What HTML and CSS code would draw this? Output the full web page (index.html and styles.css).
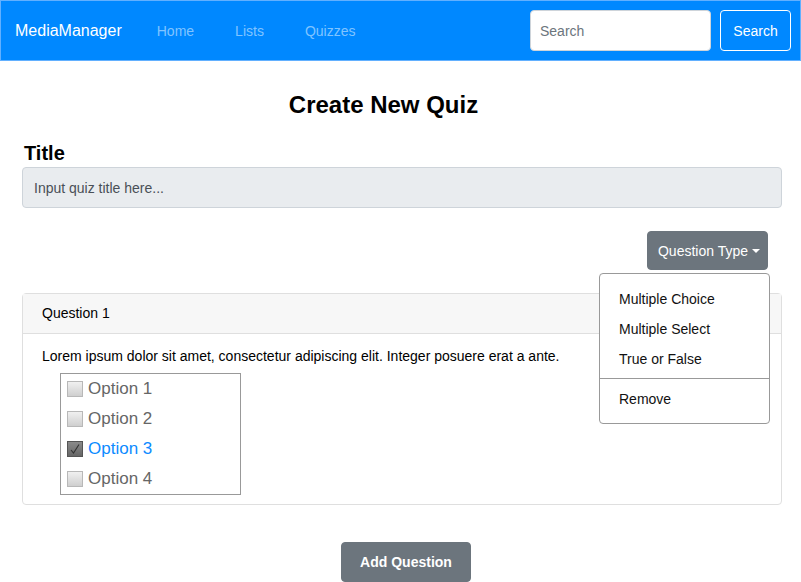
FILE: index.html
```html
<!DOCTYPE html>
<html>
<head>
<meta charset="utf-8">
<link rel="stylesheet" href="styles.css">
</head>
<body>
<nav class="navbar">
  <a class="brand">MediaManager</a>
  <ul class="nav-links">
    <li><a>Home</a></li>
    <li><a>Lists</a></li>
    <li><a>Quizzes</a></li>
  </ul>
  <form class="search">
    <input class="search-input" type="text" placeholder="Search">
    <button class="search-btn" type="button">Search</button>
  </form>
</nav>
<main class="container">
  <h1 class="page-title">Create New Quiz</h1>
  <label class="field-label">Title</label>
  <input class="title-input" type="text" placeholder="Input quiz title here...">
  <div class="toolbar">
    <div class="dropdown">
      <button class="btn-gray" type="button">Question Type<span class="caret"></span></button>
      <div class="menu">
        <a class="menu-item">Multiple Choice</a>
        <a class="menu-item">Multiple Select</a>
        <a class="menu-item">True or False</a>
        <div class="menu-divider"></div>
        <a class="menu-item">Remove</a>
      </div>
    </div>
  </div>
  <section class="card">
    <div class="card-header">Question 1</div>
    <div class="card-body">
      <p class="question-text">Lorem ipsum dolor sit amet, consectetur adipiscing elit. Integer posuere erat a ante.</p>
      <div class="options">
        <div class="option"><span class="box"></span><span>Option 1</span></div>
        <div class="option"><span class="box"></span><span>Option 2</span></div>
        <div class="option selected"><span class="box checked"><svg width="14" height="14" viewBox="0 0 14 14"><path d="M3 8 L5.5 11 L11 2.5" fill="none" stroke="#333" stroke-width="1.1"/></svg></span><span>Option 3</span></div>
        <div class="option"><span class="box"></span><span>Option 4</span></div>
      </div>
    </div>
  </section>
  <div class="actions">
    <button class="btn-gray btn-bold" type="button">Add Question</button>
  </div>
</main>
</body>
</html>
```

FILE: styles.css
```css
* { box-sizing: border-box; }
html, body { margin: 0; padding: 0; }
body {
  font-family: "Liberation Sans", Arial, sans-serif;
  font-size: 14px;
  color: #000;
  background: #fff;
  overflow: hidden;
}
.navbar {
  display: flex;
  align-items: center;
  height: 61px;
  padding: 0 9px 0 14px;
  background: #0088ff;
  border: 1px solid #62b0ff;
}
.brand {
  font-size: 16px;
  color: #fff;
  margin-right: 14.5px;
}
.nav-links {
  display: flex;
  list-style: none;
  margin: 0;
  padding: 0;
  flex: 1;
}
.nav-links a {
  display: block;
  padding: 0 20.5px;
  font-size: 14px;
  color: #80c4ff;
}
.search { display: flex; gap: 9px; }
.search-input {
  width: 181px;
  height: 41px;
  padding: 0 9px;
  border: 1px solid #ced4da;
  border-radius: 4px;
  font: 14px "Liberation Sans", Arial, sans-serif;
  color: #495057;
}
.search-input::placeholder { color: #6c757d; }
.search-btn {
  width: 71px;
  height: 41px;
  background: transparent;
  border: 1px solid #fff;
  border-radius: 4px;
  color: #fff;
  font: 14px "Liberation Sans", Arial, sans-serif;
  padding: 0;
}
.container {
  width: 760px;
  margin-left: 22px;
}
.page-title {
  margin: 30px 0 0;
  padding-right: 37px;
  font-size: 24px;
  line-height: 28px;
  text-align: center;
  font-weight: bold;
}
.field-label {
  display: block;
  margin-top: 23px;
  padding-left: 2px;
  font-size: 20px;
  line-height: 23px;
  font-weight: bold;
}
.title-input {
  display: block;
  width: 760px;
  height: 41px;
  margin-top: 2px;
  padding: 0 11px;
  background: #e9ecef;
  border: 1px solid #ced4da;
  border-radius: 4px;
  font: 14px "Liberation Sans", Arial, sans-serif;
}
.title-input::placeholder { color: #495057; }
.toolbar {
  display: flex;
  justify-content: flex-end;
  padding: 23px 14px 23px 0;
}
.dropdown { position: relative; }
.btn-gray {
  display: inline-flex;
  align-items: center;
  height: 39px;
  padding: 0 7px 0 10px;
  background: #6c757d;
  border: 1px solid #6c757d;
  border-radius: 4px;
  color: #fff;
  font: 14px "Liberation Sans", Arial, sans-serif;
  white-space: nowrap;
}
.caret {
  display: inline-block;
  width: 0;
  height: 0;
  margin-left: 4px;
  border-left: 4.5px solid transparent;
  border-right: 4.5px solid transparent;
  border-top: 4.5px solid #fff;
}
.menu {
  position: absolute;
  top: 42px;
  right: -2px;
  width: 171px;
  padding: 10px 0 9px;
  background: #fff;
  border: 1px solid #999;
  border-radius: 4px;
  z-index: 5;
}
.menu-item {
  display: block;
  height: 30px;
  line-height: 30px;
  padding: 0 19px;
  font-size: 14px;
  color: #111;
}
.menu-divider {
  height: 1px;
  margin: 4px 0 5px;
  background: #999;
}
.card {
  border: 1px solid #dfdfdf;
  border-radius: 4px;
}
.card-header {
  height: 40px;
  padding: 0 19px;
  line-height: 39px;
  background: #f7f7f7;
  border-bottom: 1px solid #dfdfdf;
  font-size: 14px;
}
.card-body {
  padding: 12px 19px 9px;
}
.question-text {
  margin: 0 0 7px;
  line-height: 20px;
  font-size: 14px;
}
.options {
  width: 181px;
  margin-left: 18px;
  border: 1px solid #999;
}
.option {
  display: flex;
  align-items: center;
  gap: 5px;
  height: 30px;
  padding-left: 6px;
  font-size: 17px;
  color: #666;
}
.option.selected { color: #0d8bff; }
.box {
  display: inline-flex;
  align-items: center;
  justify-content: center;
  width: 16px;
  height: 16px;
  border: 1px solid #b8b8b8;
  background: linear-gradient(#f0f0f0, #cfcfcf);
}
.box.checked {
  border-color: #555;
  background: linear-gradient(#8a8a8a, #666);
}
.actions {
  display: flex;
  justify-content: center;
  padding: 37px 0 0 8px;
}
.btn-bold {
  height: 40px;
  width: 130px;
  padding: 0;
  font-weight: bold;
  justify-content: center;
}
```
